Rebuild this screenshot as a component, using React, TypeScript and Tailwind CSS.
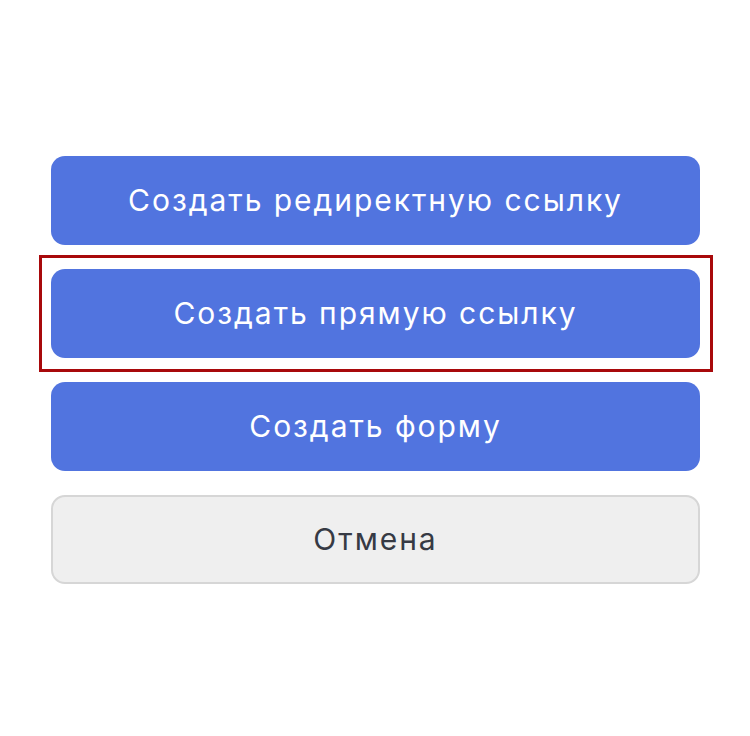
export default function App() {
  return (
    <div
      className="flex h-[736px] w-[750px] flex-col gap-[24px] bg-white pl-[51px] pr-[50px] pt-[156px]"
      style={{ fontFamily: "Inter, 'Noto Sans', sans-serif" }}
    >
      <ActionButton label="Создать редиректную ссылку" />
      <div className="relative">
        <div className="pointer-events-none absolute -bottom-[14px] -left-[12px] -right-[13px] -top-[14px] border-[3px] border-[#a8090b]" />
        <ActionButton label="Создать прямую ссылку" />
      </div>
      <ActionButton label="Создать форму" />
      <button
        type="button"
        className="flex h-[89px] w-full shrink-0 items-center justify-center rounded-[14px] border-2 border-[#d6d6d6] bg-[#efefef] text-[30px] tracking-[0.065em] text-[#363a44]"
      >
        Отмена
      </button>
    </div>
  );
}

function ActionButton({ label }: { label: string }) {
  return (
    <button
      type="button"
      className="flex h-[89px] w-full shrink-0 items-center justify-center rounded-[14px] bg-[#5174df] text-[30px] tracking-[0.065em] text-white"
    >
      {label}
    </button>
  );
}
